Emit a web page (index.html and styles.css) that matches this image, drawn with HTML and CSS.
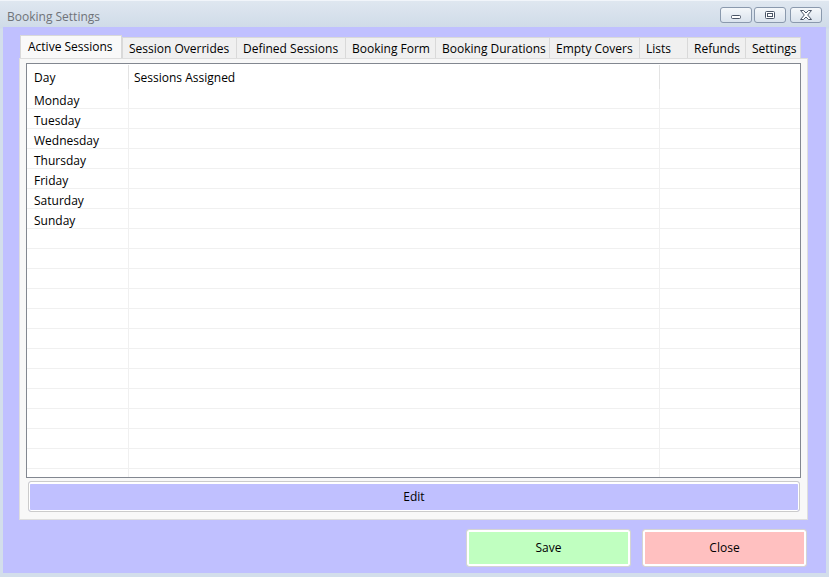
FILE: index.html
```html
<!DOCTYPE html>
<html>
<head>
<meta charset="utf-8">
<link rel="stylesheet" href="styles.css">
</head>
<body>
<div class="window">
  <div class="titlebar">
    <span class="title">Booking Settings</span>
    <div class="caption-buttons">
      <div class="cap-btn">
        <svg width="12" height="10" viewBox="0 0 12 10"><rect x="1.5" y="5.5" width="9" height="3" rx="1" fill="#fff" stroke="#4a5566"/></svg>
      </div>
      <div class="cap-btn">
        <svg width="12" height="10" viewBox="0 0 12 10"><rect x="1.5" y="1.5" width="9" height="7" rx="1" fill="#fff" stroke="#4a5566"/><rect x="3.5" y="3.5" width="5" height="3" fill="none" stroke="#4a5566"/></svg>
      </div>
      <div class="cap-btn cap-close">
        <svg width="14" height="10" viewBox="0 0 14 10"><path d="M1.5 0.5 H4.5 L7 3 L9.5 0.5 H12.5 L8.7 5 L12.5 9.5 H9.5 L7 7 L4.5 9.5 H1.5 L5.3 5 Z" fill="#fff" stroke="#4a5566" stroke-linejoin="round"/></svg>
      </div>
    </div>
  </div>
  <div class="client">
    <div class="tabs">
      <div class="tab active t-active">Active Sessions</div>
      <div class="tab t-overrides">Session Overrides</div>
      <div class="tab t-defined">Defined Sessions</div>
      <div class="tab t-form">Booking Form</div>
      <div class="tab t-durations">Booking Durations</div>
      <div class="tab t-covers">Empty Covers</div>
      <div class="tab t-lists">Lists</div>
      <div class="tab t-refunds">Refunds</div>
      <div class="tab t-settings">Settings</div>
    </div>
    <div class="panel">
      <div class="grid">
        <div class="grid-head">
          <div class="hcell c1">Day</div>
          <div class="hcell c2">Sessions Assigned</div>
          <div class="hcell c3"></div>
        </div>
        <div class="grid-body">
          <div class="row"><div class="cell c1">Monday</div><div class="cell c2"></div><div class="cell c3"></div></div>
          <div class="row"><div class="cell c1">Tuesday</div><div class="cell c2"></div><div class="cell c3"></div></div>
          <div class="row"><div class="cell c1">Wednesday</div><div class="cell c2"></div><div class="cell c3"></div></div>
          <div class="row"><div class="cell c1">Thursday</div><div class="cell c2"></div><div class="cell c3"></div></div>
          <div class="row"><div class="cell c1">Friday</div><div class="cell c2"></div><div class="cell c3"></div></div>
          <div class="row"><div class="cell c1">Saturday</div><div class="cell c2"></div><div class="cell c3"></div></div>
          <div class="row"><div class="cell c1">Sunday</div><div class="cell c2"></div><div class="cell c3"></div></div>
          <div class="row"><div class="cell c1"></div><div class="cell c2"></div><div class="cell c3"></div></div>
          <div class="row"><div class="cell c1"></div><div class="cell c2"></div><div class="cell c3"></div></div>
          <div class="row"><div class="cell c1"></div><div class="cell c2"></div><div class="cell c3"></div></div>
          <div class="row"><div class="cell c1"></div><div class="cell c2"></div><div class="cell c3"></div></div>
          <div class="row"><div class="cell c1"></div><div class="cell c2"></div><div class="cell c3"></div></div>
          <div class="row"><div class="cell c1"></div><div class="cell c2"></div><div class="cell c3"></div></div>
          <div class="row"><div class="cell c1"></div><div class="cell c2"></div><div class="cell c3"></div></div>
          <div class="row"><div class="cell c1"></div><div class="cell c2"></div><div class="cell c3"></div></div>
          <div class="row"><div class="cell c1"></div><div class="cell c2"></div><div class="cell c3"></div></div>
          <div class="row"><div class="cell c1"></div><div class="cell c2"></div><div class="cell c3"></div></div>
          <div class="row"><div class="cell c1"></div><div class="cell c2"></div><div class="cell c3"></div></div>
          <div class="row"><div class="cell c1"></div><div class="cell c2"></div><div class="cell c3"></div></div>
          <div class="row"><div class="cell c1"></div><div class="cell c2"></div><div class="cell c3"></div></div>
        </div>
      </div>
      <div class="btn edit-btn">Edit</div>
    </div>
    <div class="actions">
      <div class="btn action-btn save-btn">Save</div>
      <div class="btn action-btn close-btn">Close</div>
    </div>
  </div>
</div>
</body>
</html>
```

FILE: styles.css
```css
* { box-sizing: border-box; }
html, body {
  margin: 0;
  padding: 0;
}
body {
  width: 829px;
  height: 577px;
  overflow: hidden;
  background: #d3deeb;
  font-family: "Open Sans", "Liberation Sans", sans-serif;
  font-size: 12px;
  color: #000;
}
.window {
  width: 829px;
  height: 577px;
  display: flex;
  flex-direction: column;
  border-top: 1px solid #f1f5fa;
  background: linear-gradient(#dfe7f0 0px, #cfdbe8 27px, #d3deeb 28px);
}
.titlebar {
  height: 26px;
  display: flex;
  align-items: center;
  justify-content: space-between;
  padding: 0 7px 0 7px;
}
.title {
  color: #6f7378;
  font-size: 12px;
  margin-top: 5px;
}
.caption-buttons {
  display: flex;
  gap: 2px;
  align-self: flex-start;
  margin-top: 6px;
}
.cap-btn {
  width: 32px;
  height: 16px;
  border: 1px solid #8a99ad;
  border-radius: 3px;
  background: linear-gradient(#f4f7fa, #dae3ed);
  display: flex;
  align-items: center;
  justify-content: center;
}
.cap-close { margin-left: 2px; }
.client {
  flex: 1;
  margin: 0 3px 4px 3px;
  background: #c0c0ff;
  padding: 8px 18px 6px 16px;
  display: flex;
  flex-direction: column;
}
.tabs {
  display: flex;
  align-items: flex-end;
  height: 23px;
  padding-left: 1px;
}
.tab {
  height: 21px;
  background: #f0f0f0;
  border: 1px solid #d9d9d9;
  border-bottom: none;
  border-right: none;
  padding: 0 0 0 6px;
  line-height: 21px;
  white-space: nowrap;
  overflow: hidden;
}
.tab.active {
  height: 23px;
  background: #f9f9f9;
  padding-left: 7px;
  line-height: 22px;
  border-right: 1px solid #d9d9d9;
}
.t-settings { border-right: 1px solid #d9d9d9; }
.t-active { width: 102px; }
.t-overrides { width: 114px; }
.t-defined { width: 109px; }
.t-form { width: 90px; }
.t-durations { width: 114px; }
.t-covers { width: 90px; }
.t-lists { width: 48px; }
.t-refunds { width: 58px; }
.t-settings { width: 56px; }
.panel {
  width: 789px;
  height: 462px;
  background: #f8f8f8;
  border: 1px solid #dedede;
  padding: 4px 6px 7px 6px;
  display: flex;
  flex-direction: column;
}
.grid {
  height: 415px;
  border: 1px solid #828790;
  background: #fff;
  overflow: hidden;
}
.grid-head {
  display: flex;
  height: 25px;
}
.hcell {
  height: 25px;
  line-height: 25px;
  padding-top: 1px;
  position: relative;
  white-space: nowrap;
}
.hcell.c1::after, .hcell.c2::after {
  content: "";
  position: absolute;
  right: 0;
  top: 1px;
  bottom: 0;
  width: 1px;
  background: #e3e3e3;
}
.c1 { width: 102px; padding-left: 7px; }
.c2 { width: 531px; padding-left: 5px; }
.c3 { width: 140px; }
.row {
  display: flex;
  height: 20px;
  border-bottom: 1px solid #f0f0f0;
}
.cell {
  height: 19px;
  line-height: 19px;
  padding-top: 2px;
  white-space: nowrap;
}
.cell.c1, .cell.c2 { border-right: 1px solid #f0f0f0; }
.btn {
  display: flex;
  align-items: center;
  justify-content: center;
  border: 1px solid #cbcbcb;
  border-radius: 3px;
}
.edit-btn {
  margin: 3px 1px 0 2px;
  height: 31px;
  padding-bottom: 1px;
  background: #c0c0ff;
  box-shadow: inset 0 0 0 1px #fff, inset 0 2px 0 0 #fff;
}
.actions {
  display: flex;
  justify-content: flex-end;
  gap: 11px;
  margin-top: 9px;
  margin-right: 1px;
}
.action-btn {
  width: 165px;
  height: 38px;
  padding-bottom: 1px;
  box-shadow: inset 0 0 0 2px #fff;
  border-color: #d4d4d4;
}
.save-btn { background: #c0ffc0; }
.close-btn { background: #ffc0c0; }
```
